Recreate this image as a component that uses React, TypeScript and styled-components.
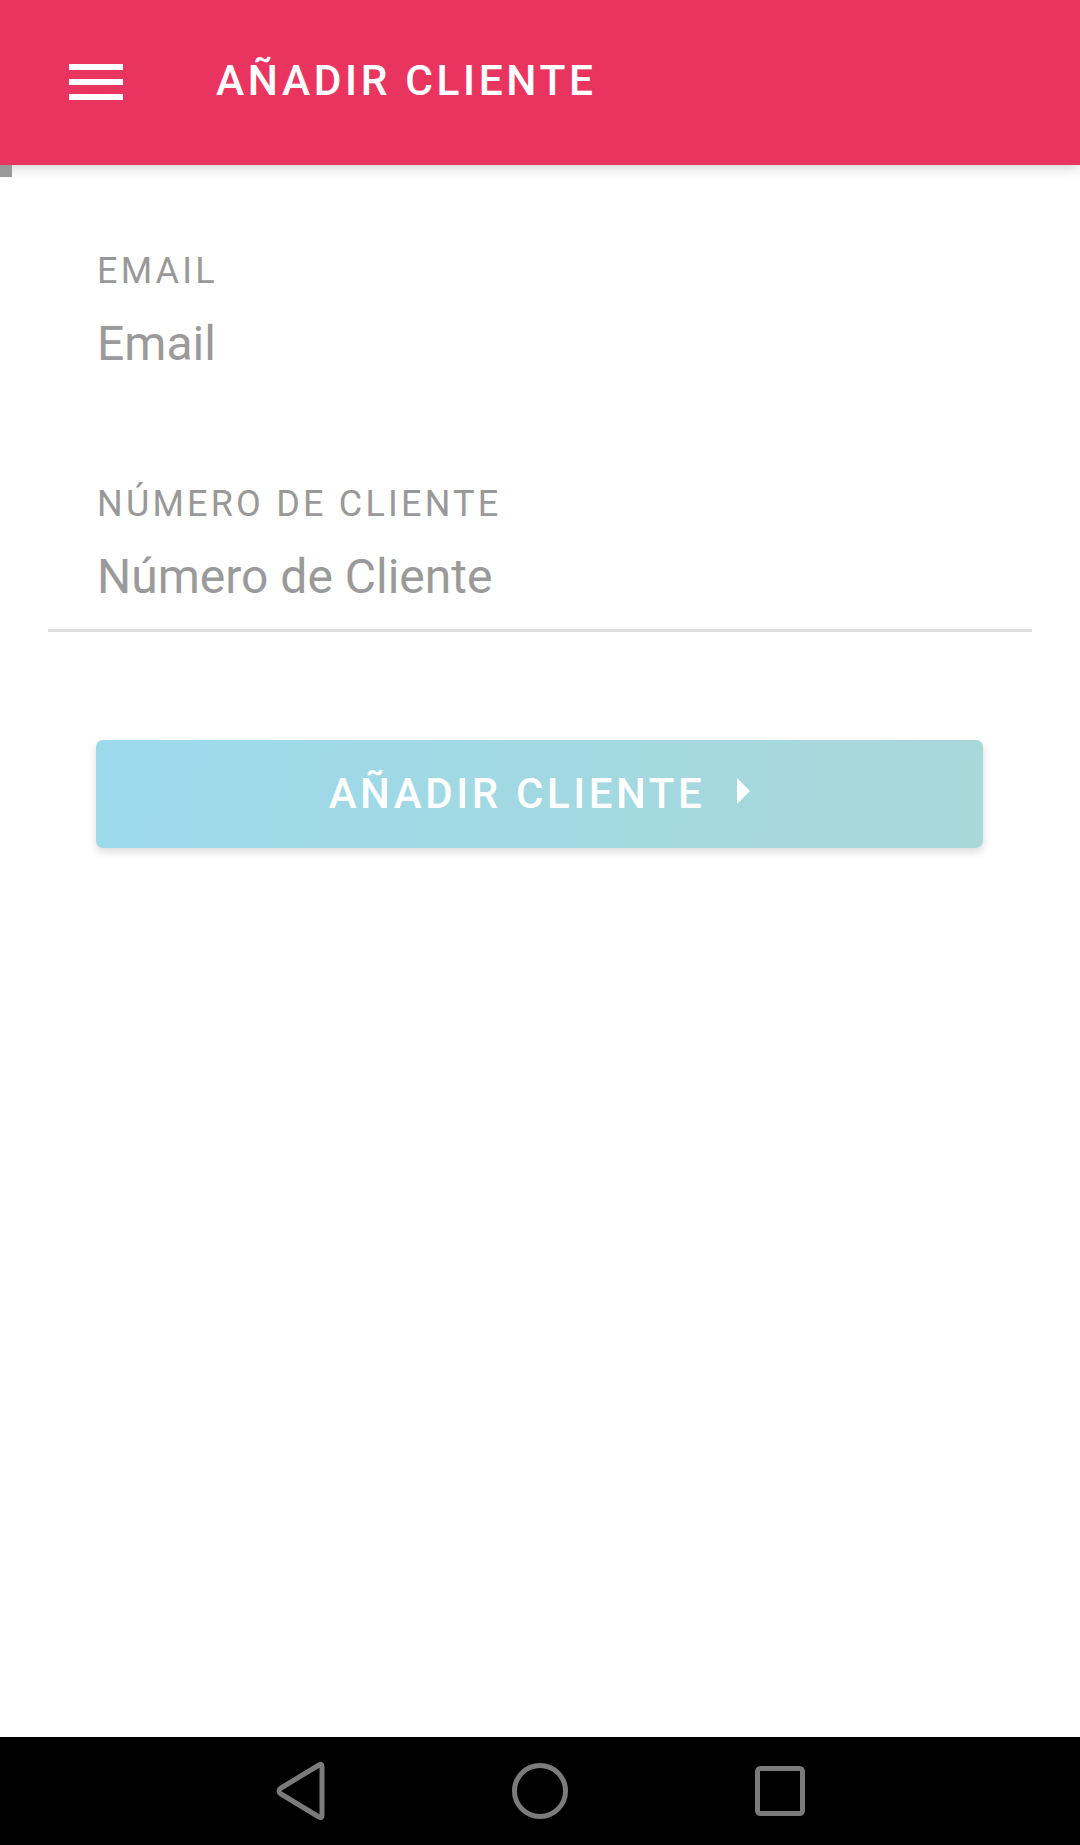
import React from "react";
import styled, { createGlobalStyle } from "styled-components";

const GlobalStyle = createGlobalStyle`
  html, body { margin: 0; padding: 0; background: #ffffff; }
  body { font-family: Roboto, "Noto Sans", Arial, sans-serif; }
  * { box-sizing: border-box; }
`;

const Page = styled.div`
  width: 1080px;
  height: 1845px;
  display: flex;
  flex-direction: column;
  background: #ffffff;
  overflow: hidden;
`;

const Toolbar = styled.header`
  position: relative;
  height: 165px;
  flex: 0 0 165px;
  background: #ea3460;
  display: flex;
  align-items: center;
  padding-left: 69px;
  gap: 93px;
  box-shadow: 0 3px 12px rgba(0, 0, 0, 0.18);
  z-index: 2;
`;

const MenuButton = styled.div`
  width: 54px;
  height: 36px;
  display: flex;
  flex-direction: column;
  justify-content: space-between;
  margin-top: -2px;
`;

const MenuBar = styled.span`
  display: block;
  height: 6px;
  background: #ffffff;
`;

const Title = styled.h1`
  margin: 0;
  font-family: Roboto, sans-serif;
  font-weight: 500;
  font-size: 42.5px;
  line-height: 42px;
  letter-spacing: 3.6px;
  color: #ffffff;
  margin-top: -4px;
`;

const ScrollMark = styled.span`
  position: absolute;
  left: 0;
  top: 100%;
  width: 12px;
  height: 12px;
  background: #999999;
`;

const Content = styled.main`
  flex: 1;
  display: flex;
  flex-direction: column;
  padding-top: 85px;
`;

const List = styled.div`
  margin: 0 48px;
  display: flex;
  flex-direction: column;
  gap: 84px;
`;

const Item = styled.label<{ $divider?: boolean }>`
  display: flex;
  flex-direction: column;
  padding: 0 0 24px 49px;
  border-bottom: 3px solid ${(p) => (p.$divider ? "#dedede" : "transparent")};
`;

const FieldLabel = styled.span`
  font-family: Roboto, sans-serif;
  font-size: 36px;
  line-height: 42px;
  letter-spacing: 3.2px;
  color: #999999;
  text-transform: uppercase;
  margin-bottom: 24px;
`;

const FieldInput = styled.input`
  border: none;
  outline: none;
  padding: 0;
  margin: 0;
  height: 56px;
  font-family: Roboto, sans-serif;
  font-size: 48px;
  line-height: 56px;
  color: #333333;
  background: transparent;
  &::placeholder {
    color: #9a9a9a;
    opacity: 1;
  }
`;

const SubmitButton = styled.button`
  margin: 108px 97px 0 96px;
  height: 108px;
  border: none;
  border-radius: 7px;
  background: linear-gradient(100deg, #9bd9ec 0%, #a9d8d8 100%);
  box-shadow: 0 4px 8px rgba(0, 0, 0, 0.14);
  display: flex;
  align-items: center;
  justify-content: center;
  gap: 32px;
  padding: 0;
  cursor: pointer;
`;

const ButtonText = styled.span`
  font-family: Roboto, sans-serif;
  font-weight: 500;
  font-size: 42px;
  line-height: 42px;
  letter-spacing: 3.6px;
  color: #ffffff;
`;

const Caret = styled.span`
  width: 0;
  height: 0;
  border-top: 13.5px solid transparent;
  border-bottom: 13.5px solid transparent;
  border-left: 13px solid #ffffff;
  margin-bottom: 6px;
`;

const NavBar = styled.nav`
  flex: 0 0 108px;
  height: 108px;
  background: #000000;
  display: flex;
  align-items: center;
  justify-content: center;
`;

const NavSlot = styled.div`
  width: 240px;
  display: flex;
  justify-content: center;
  align-items: center;
`;

const NavIcon = styled.svg`
  display: block;
`;

export default function App() {
  return (
    <>
      <GlobalStyle />
      <Page>
        <Toolbar>
          <MenuButton>
            <MenuBar />
            <MenuBar />
            <MenuBar />
          </MenuButton>
          <Title>AÑADIR CLIENTE</Title>
          <ScrollMark />
        </Toolbar>
        <Content>
          <List>
            <Item>
              <FieldLabel>Email</FieldLabel>
              <FieldInput type="email" placeholder="Email" />
            </Item>
            <Item $divider>
              <FieldLabel>Número de Cliente</FieldLabel>
              <FieldInput type="text" placeholder="Número de Cliente" />
            </Item>
          </List>
          <SubmitButton type="button">
            <ButtonText>AÑADIR CLIENTE</ButtonText>
            <Caret />
          </SubmitButton>
        </Content>
        <NavBar>
          <NavSlot>
            <NavIcon width="60" height="60" viewBox="0 0 60 60">
              <path
                d="M52 5.5 L52 54.5 Q52 58 49 56 L11 33 Q7 30 11 27 L49 4 Q52 2 52 5.5 Z"
                fill="none"
                stroke="#7b7b7b"
                strokeWidth="5"
                strokeLinejoin="round"
              />
            </NavIcon>
          </NavSlot>
          <NavSlot>
            <NavIcon width="60" height="60" viewBox="0 0 60 60">
              <circle cx="30" cy="30" r="25.5" fill="none" stroke="#7b7b7b" strokeWidth="5" />
            </NavIcon>
          </NavSlot>
          <NavSlot>
            <NavIcon width="60" height="60" viewBox="0 0 60 60">
              <rect x="7.5" y="7.5" width="45" height="45" rx="3" fill="none" stroke="#7b7b7b" strokeWidth="5" />
            </NavIcon>
          </NavSlot>
        </NavBar>
      </Page>
    </>
  );
}
